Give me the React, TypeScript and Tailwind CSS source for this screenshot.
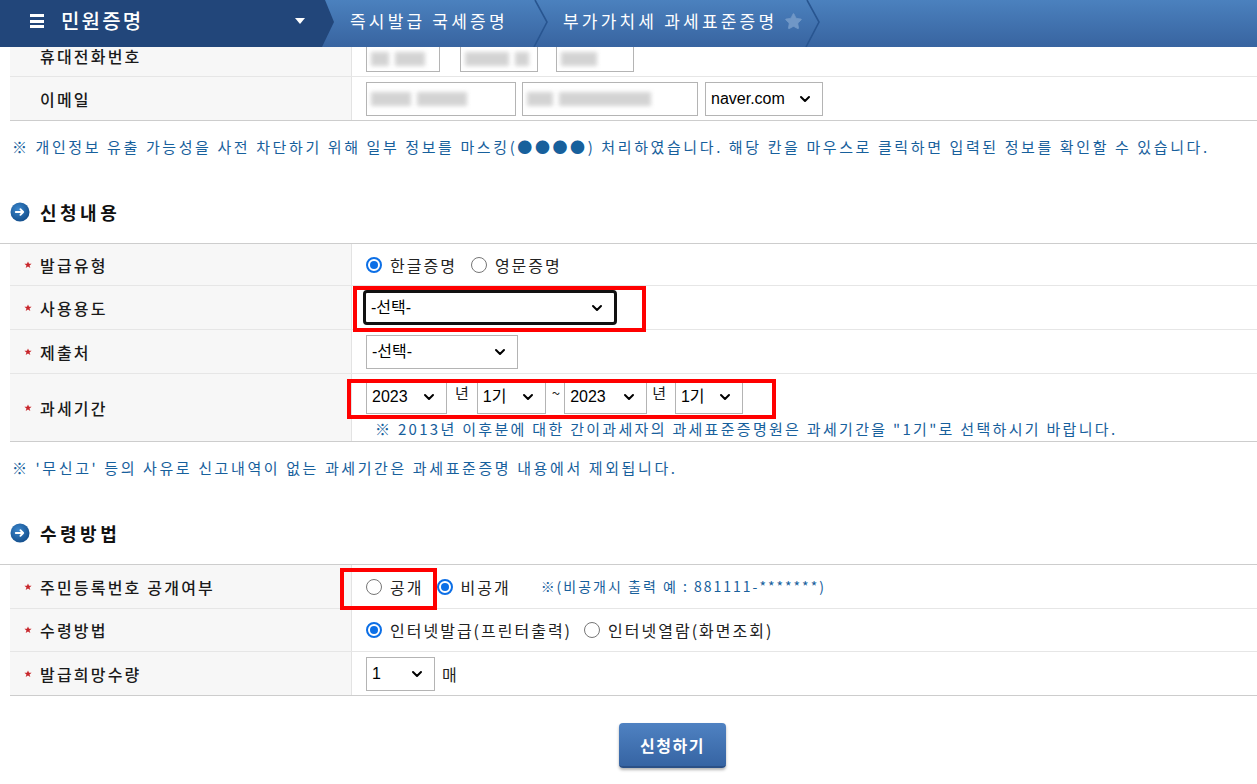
import { ChevronDown, Star } from 'lucide-react';
import clsx from 'clsx';

function Req() {
  return (
    <svg width="8" height="8" viewBox="0 0 10 10" className="shrink-0">
      <path d="M5 0.5l1.3 3h3.2l-2.6 2 1 3.2L5 6.8 2.1 8.7l1-3.2-2.6-2h3.2z" fill="#c8262b" />
    </svg>
  );
}

function Bullet() {
  return (
    <svg width="20" height="20" viewBox="0 0 20 20" className="shrink-0">
      <defs>
        <radialGradient id="bg" cx="40%" cy="35%" r="70%">
          <stop offset="0%" stopColor="#3a86cc" />
          <stop offset="100%" stopColor="#134d8a" />
        </radialGradient>
      </defs>
      <circle cx="10" cy="10" r="9.5" fill="url(#bg)" />
      <path d="M5.8 10h7.4M10.4 7.2l2.8 2.8-2.8 2.8" stroke="#fff" strokeWidth="1.9" fill="none" strokeLinecap="round" strokeLinejoin="round" />
    </svg>
  );
}

function Radio({ checked, className }: { checked?: boolean; className?: string }) {
  return checked ? (
    <span className={clsx('flex h-4 w-4 shrink-0 items-center justify-center rounded-full border-2 border-[#0c6fe6] bg-white', className)}>
      <span className="h-[8px] w-[8px] rounded-full bg-[#0c6fe6]" />
    </span>
  ) : (
    <span className={clsx('block h-4 w-4 shrink-0 rounded-full border border-[#767676] bg-white', className)} />
  );
}

function Select({ value, className, focus }: { value: string; className?: string; focus?: boolean }) {
  return (
    <div
      className={clsx(
        "flex items-center justify-between bg-white pl-[5px] pr-[9px] text-[16px] tracking-normal text-black font-['Liberation_Sans','Noto_Sans_CJK_KR',sans-serif]",
        focus ? 'rounded-[4px] border-[3px] border-[#111]' : 'border border-[#b4b4b4]',
        className,
      )}
    >
      <span>{value}</span>
      <ChevronDown className="h-4 w-4" strokeWidth={3} />
    </div>
  );
}

function Masked({ className, blocks }: { className?: string; blocks: number[] }) {
  return (
    <div className={clsx('flex items-center gap-[6px] overflow-hidden bg-white px-[4px]', className)}>
      {blocks.map((w, i) => (
        <span key={i} className="h-[14px] bg-[#c9c9c9] opacity-80 blur-[2px]" style={{ width: w }} />
      ))}
    </div>
  );
}

function Row({
  label,
  req,
  h,
  last,
  children,
  alignTop,
}: {
  label: string;
  req?: boolean;
  h: string;
  last?: boolean;
  children: React.ReactNode;
  alignTop?: boolean;
}) {
  return (
    <div className={clsx('flex', h, last ? 'border-b border-[#cdcdcd]' : 'border-b border-[#e6e6e6]')}>
      <div
        className={clsx(
          'flex w-[342px] shrink-0 gap-[8px] border-r border-[#e3e3e3] bg-[#f7f7f7] text-[16px] font-medium tracking-[2.2px] text-[#1a1a1a]',
          alignTop ? 'items-start leading-[18px]' : 'items-center',
          req ? 'pl-[14px]' : 'pl-[30px]',
        )}
      >
        {req && <Req />}
        <span>{label}</span>
      </div>
      <div className="flex min-w-0 flex-1 items-center pl-[14px] text-[16px] tracking-[2px] text-[#222]">{children}</div>
    </div>
  );
}

function Crumb() {
  return (
    <svg width="16" height="47" viewBox="0 0 16 47" className="shrink-0">
      <polyline points="2,0 14,22 1,47" fill="none" stroke="#285590" strokeWidth="1.6" />
    </svg>
  );
}

export default function App() {
  return (
    <div className="relative h-[784px] w-full overflow-hidden bg-white font-['Noto_Sans_CJK_KR','Noto_Sans',sans-serif]">
      <header className="flex h-[47px] bg-gradient-to-b from-[#4b81be] to-[#3864a0] text-white">
        <div className="flex h-full w-[334px] shrink-0 items-center bg-[#22467a] pb-[5px] pl-[30px] [clip-path:polygon(0_0,325px_0,334px_22px,322px_47px,0_47px)]">
          <span className="flex w-[14px] flex-col gap-[2.5px]">
            <span className="h-[3px] bg-white" />
            <span className="h-[3px] bg-white" />
            <span className="h-[3px] bg-white" />
          </span>
          <span className="ml-[17px] text-[20px] font-medium tracking-[2.2px]">민원증명</span>
          <svg width="10" height="6" viewBox="0 0 10 6" className="ml-auto mr-[29px]">
            <path d="M0 0h10L5 6z" fill="#fff" />
          </svg>
        </div>
        <div className="flex w-[199px] shrink-0 items-center pb-[5px] pl-[16px] text-[17px] tracking-[3.2px]">즉시발급 국세증명</div>
        <Crumb />
        <div className="flex w-[256px] shrink-0 items-center pb-[5px] pl-[14px] text-[17px] tracking-[3.2px]">
          <span>부가가치세 과세표준증명</span>
          <Star className="ml-auto mr-[2px] h-[19px] w-[19px] text-[#7097c6]" fill="#7097c6" strokeWidth={1} />
        </div>
        <Crumb />
      </header>

      <div className="pl-[10px]">
        <Row label="휴대전화번호" h="h-[30px]" alignTop>
          <div className="flex h-full items-start">
            <Masked className="h-[25px] w-[74px] border-x border-b border-[#b4b4b4]" blocks={[18, 30]} />
            <Masked className="ml-[20px] h-[25px] w-[78px] border-x border-b border-[#b4b4b4]" blocks={[44, 14]} />
            <Masked className="ml-[18px] h-[25px] w-[78px] border-x border-b border-[#b4b4b4]" blocks={[36]} />
          </div>
        </Row>
        <Row label="이메일" h="h-[44px]" last>
          <Masked className="h-[34px] w-[150px] border border-[#b4b4b4]" blocks={[40, 50]} />
          <Masked className="ml-[6px] h-[34px] w-[176px] border border-[#b4b4b4]" blocks={[26, 92]} />
          <Select value="naver.com" className="ml-[7px] h-[34px] w-[118px]" />
        </Row>
      </div>

      <p className="mt-[15px] pl-[12px] text-[15px] leading-[22px] tracking-[2.6px] text-[#17609c]">
        ※ 개인정보 유출 가능성을 사전 차단하기 위해 일부 정보를 마스킹(●●●●) 처리하였습니다. 해당 칸을 마우스로 클릭하면 입력된 정보를 확인할 수 있습니다.
      </p>

      <h2 className="mt-[42px] flex h-[24px] items-center gap-[10px] pl-[10px] text-[18px] font-semibold tracking-[3.5px] text-[#111]">
        <Bullet />
        신청내용
      </h2>

      <div className="mt-[19px] border-t border-[#cdcdcd] pl-[10px]">
        <Row label="발급유형" req h="h-[42px]">
          <Radio checked />
          <span className="ml-[8px]">한글증명</span>
          <Radio className="ml-[14px]" />
          <span className="ml-[8px]">영문증명</span>
        </Row>
        <Row label="사용용도" req h="h-[44px]">
          <Select value="-선택-" focus className="-ml-[3px] h-[35px] w-[254px]" />
        </Row>
        <Row label="제출처" req h="h-[44px]">
          <Select value="-선택-" className="h-[34px] w-[152px]" />
        </Row>
        <Row label="과세기간" req h="h-[68px]" last>
          <div className="flex flex-col pt-[3px]">
            <div className="flex h-[34px] items-start tracking-normal">
              <Select value="2023" className="h-[34px] w-[81px]" />
              <span className="ml-[8px] mt-[2px] text-[15px]">년</span>
              <Select value="1기" className="ml-[8px] h-[34px] w-[69px]" />
              <span className="ml-[6px] mt-[2px] text-[15px]">~</span>
              <Select value="2023" className="ml-[4px] h-[34px] w-[83px]" />
              <span className="ml-[5px] mt-[2px] text-[15px]">년</span>
              <Select value="1기" className="ml-[9px] h-[34px] w-[68px]" />
            </div>
            <p className="mt-[5px] pl-[9px] text-[15px] leading-[20px] tracking-[2.3px] text-[#17609c]">
              ※ 2013년 이후분에 대한 간이과세자의 과세표준증명원은 과세기간을 "1기"로 선택하시기 바랍니다.
            </p>
          </div>
        </Row>
      </div>

      <p className="mt-[15px] pl-[12px] text-[15px] leading-[22px] tracking-[2.6px] text-[#17609c]">
        ※ '무신고' 등의 사유로 신고내역이 없는 과세기간은 과세표준증명 내용에서 제외됩니다.
      </p>

      <h2 className="mt-[42px] flex h-[24px] items-center gap-[10px] pl-[10px] text-[18px] font-semibold tracking-[3.5px] text-[#111]">
        <Bullet />
        수령방법
      </h2>

      <div className="mt-[19px] border-t border-[#cdcdcd] pl-[10px]">
        <Row label="주민등록번호 공개여부" req h="h-[44px]">
          <Radio />
          <span className="ml-[8px]">공개</span>
          <Radio checked className="ml-[14px]" />
          <span className="ml-[7px]">비공개</span>
          <span className="ml-[30px] text-[14px] tracking-[2px] text-[#17609c]">※(비공개시 출력 예 : 881111-*******)</span>
        </Row>
        <Row label="수령방법" req h="h-[43px]">
          <Radio checked />
          <span className="ml-[8px]">인터넷발급(프린터출력)</span>
          <Radio className="ml-[12px]" />
          <span className="ml-[8px]">인터넷열람(화면조회)</span>
        </Row>
        <Row label="발급희망수량" req h="h-[44px]" last>
          <Select value="1" className="h-[34px] w-[69px]" />
          <span className="ml-[7px]">매</span>
        </Row>
      </div>

      <button className="ml-[619px] mt-[27px] flex h-[45px] w-[107px] items-center justify-center rounded-[4px] border-b-2 border-[#2b5086] bg-gradient-to-b from-[#4f82c2] to-[#3664a3] text-[16px] font-bold tracking-[1.5px] text-white shadow-[0_2px_3px_rgba(0,0,0,0.3)]">
        신청하기
      </button>

      <div className="pointer-events-none absolute left-[353px] top-[286px] h-[46px] w-[293px] border-4 border-[#ff0000]" />
      <div className="pointer-events-none absolute left-[347px] top-[379px] h-[40px] w-[429px] border-4 border-[#ff0000]" />
      <div className="pointer-events-none absolute left-[340px] top-[568px] h-[42px] w-[97px] border-4 border-[#ff0000]" />
    </div>
  );
}
